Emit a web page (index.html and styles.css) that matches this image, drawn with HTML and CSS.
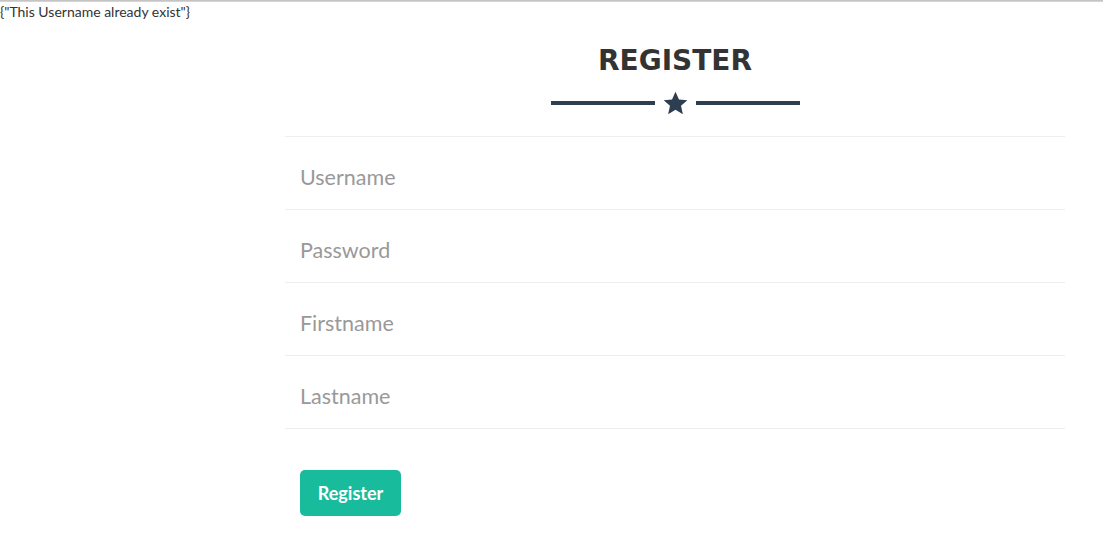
FILE: index.html
```html
<!DOCTYPE html>
<html>
<head>
<meta charset="utf-8">
<link rel="stylesheet" href="styles.css">
</head>
<body>
<div class="topbar"></div>
<div class="msg">{"This Username already exist"}</div>
<main class="wrap">
  <h2 class="title">REGISTER</h2>
  <div class="divider">
    <span class="line"></span>
    <svg class="star" viewBox="0 0 24 24" width="27" height="27"><path d="M12 1.5l3.09 6.95 7.41.7-5.6 4.95 1.65 7.4L12 17.6l-6.55 3.9 1.65-7.4-5.6-4.95 7.41-.7z" fill="#2c3e50"/></svg>
    <span class="line"></span>
  </div>
  <form class="form">
    <div class="field"><input type="text" placeholder="Username"></div>
    <div class="field"><input type="password" placeholder="Password"></div>
    <div class="field"><input type="text" placeholder="Firstname"></div>
    <div class="field"><input type="text" placeholder="Lastname"></div>
    <div class="actions"><button type="button" class="btn">Register</button></div>
  </form>
</main>
</body>
</html>
```
FILE: styles.css
```css
html, body { margin: 0; padding: 0; background: #fff; }
body { font-family: Lato, "Open Sans", sans-serif; color: #333; }
.topbar { height: 2px; background: linear-gradient(#bdbdbd, #dcdcdc); }
.msg { font-size: 14px; line-height: 19px; padding-left: 0; color: #333; }
.wrap { margin-left: 285px; width: 780px; }
.title {
  margin: 23px 0 0;
  text-align: center;
  font-family: "DejaVu Sans", sans-serif;
  font-weight: bold;
  font-size: 28px;
  line-height: 34px;
  letter-spacing: 0;
  color: #333;
}
.divider { display: flex; justify-content: center; align-items: center; gap: 7px; margin-top: 11px; height: 28px; }
.line { width: 104px; height: 4px; background: #2c3e50; }
.star { display: block; }
.form { margin-top: 19px; border-top: 1px solid #eee; }
.field { border-bottom: 1px solid #eee; height: 72px; display: flex; align-items: center; }
.field input {
  border: 0; outline: 0; background: transparent;
  padding: 8px 0 0 15px; margin: 0;
  font-family: Lato, sans-serif; font-size: 21.5px; color: #333;
  width: 100%; height: 40px; box-sizing: content-box;
}
.field input::placeholder { color: #999; }
.actions { padding: 41px 0 0 15px; }
.btn {
  background: #18bc9c; color: #fff; border: 0; border-radius: 5px;
  font-family: Lato, sans-serif; font-weight: bold; font-size: 18px;
  width: 101px; height: 46px; padding: 0; cursor: pointer;
}
```
